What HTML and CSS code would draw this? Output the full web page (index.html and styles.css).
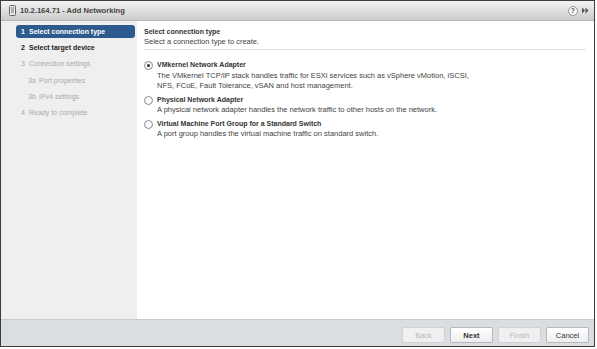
FILE: index.html
```html
<!DOCTYPE html>
<html>
<head>
<meta charset="utf-8">
<link rel="stylesheet" href="styles.css">
</head>
<body>
<div class="window">
  <div class="titlebar">
    <svg class="host-icon" width="7" height="11" viewBox="0 0 7 11">
      <rect x="0.5" y="0.5" width="6" height="10" rx="1" fill="#e8e8e8" stroke="#666"/>
      <line x1="2" y1="3" x2="5" y2="3" stroke="#777"/>
      <line x1="2" y1="5" x2="5" y2="5" stroke="#777"/>
      <line x1="2" y1="7" x2="5" y2="7" stroke="#777"/>
    </svg>
    <span class="title">10.2.164.71 - Add Networking</span>
    <span class="spacer"></span>
    <span class="help">?</span>
    <svg class="expand" width="7" height="7" viewBox="0 0 7 7">
      <path d="M0 0.5 L3 3.5 L0 6.5 Z M3.5 0.5 L6.5 3.5 L3.5 6.5 Z" fill="#555"/>
    </svg>
  </div>
  <div class="main">
    <div class="sidebar">
      <div class="step active"><span class="num">1</span>Select connection type</div>
      <div class="step current"><span class="num">2</span>Select target device</div>
      <div class="step"><span class="num">3</span>Connection settings</div>
      <div class="step sub"><span class="num">3a</span>Port properties</div>
      <div class="step sub"><span class="num">3b</span>IPv4 settings</div>
      <div class="step"><span class="num">4</span>Ready to complete</div>
    </div>
    <div class="content">
      <div class="heading">Select connection type</div>
      <div class="subheading">Select a connection type to create.</div>
      <div class="options">
        <div class="option">
          <div class="radio checked"></div>
          <div class="opt-text">
            <div class="opt-title">VMkernel Network Adapter</div>
            <div class="opt-desc">The VMkernel TCP/IP stack handles traffic for ESXi services such as vSphere vMotion, iSCSI,<br>NFS, FCoE, Fault Tolerance, vSAN and host management.</div>
          </div>
        </div>
        <div class="option">
          <div class="radio"></div>
          <div class="opt-text">
            <div class="opt-title">Physical Network Adapter</div>
            <div class="opt-desc">A physical network adapter handles the network traffic to other hosts on the network.</div>
          </div>
        </div>
        <div class="option">
          <div class="radio"></div>
          <div class="opt-text">
            <div class="opt-title">Virtual Machine Port Group for a Standard Switch</div>
            <div class="opt-desc">A port group handles the virtual machine traffic on standard switch.</div>
          </div>
        </div>
      </div>
    </div>
  </div>
  <div class="footer">
    <button class="btn disabled">Back</button>
    <button class="btn primary">Next</button>
    <button class="btn disabled">Finish</button>
    <button class="btn">Cancel</button>
  </div>
</div>
</body>
</html>
```
FILE: styles.css
```css
* { box-sizing: border-box; }
html, body { margin: 0; padding: 0; }
body {
  width: 597px;
  height: 349px;
  background: #ffffff;
  font-family: "Liberation Sans", Arial, sans-serif;
  font-size: 7.5px;
  color: #333;
}
.window {
  width: 595px;
  height: 347px;
  border: 1px solid #3c3c3c;
  display: flex;
  flex-direction: column;
  background: #fff;
}
.titlebar {
  height: 20px;
  flex: none;
  display: flex;
  align-items: center;
  padding: 0 5px 0 8px;
  background: linear-gradient(#f4f4f4, #cbcbcb);
  border-bottom: 1px solid #b8b8b8;
}
.host-icon { flex: none; }
.title {
  margin-left: 4px;
  font-weight: bold;
  font-size: 7.6px;
  color: #444;
}
.spacer { flex: 1; }
.help {
  width: 10px;
  height: 10px;
  border-radius: 50%;
  background: #f8f8f8;
  border: 1px solid #999;
  font-size: 7px;
  font-weight: bold;
  color: #555;
  display: flex;
  align-items: center;
  justify-content: center;
  margin-right: 4px;
}
.expand { flex: none; }
.main {
  flex: 1;
  display: flex;
  min-height: 0;
}
.sidebar {
  width: 136px;
  flex: none;
  background: #efefef;
  padding: 4px 2px 0 15px;
  display: flex;
  flex-direction: column;
  gap: 3px;
}
.step {
  height: 13.2px;
  line-height: 13px;
  padding-left: 5px;
  color: #aaa;
  font-size: 7px;
  white-space: nowrap;
}
.step .num { display: inline-block; width: 8px; }
.step.sub { padding-left: 12px; }
.step.sub .num { width: 11px; }
.step.active {
  background: #2e5b8d;
  color: #fff;
  font-weight: bold;
  border-radius: 3px;
}
.step.current { color: #222; font-weight: bold; }
.content {
  flex: 1;
  padding: 6px 8px 0 7px;
}
.heading {
  color: #333;
  font-weight: bold;
  font-size: 7px;
  line-height: 10px;
  height: 10px;
}
.subheading {
  color: #444;
  line-height: 10px;
  padding-bottom: 2px;
  border-bottom: 1px solid #e3e3e3;
}
.options {
  padding-top: 10px;
  display: flex;
  flex-direction: column;
  gap: 3px;
}
.option {
  display: flex;
  align-items: flex-start;
}
.radio {
  width: 9px;
  height: 9px;
  border: 1px solid #8a8a8a;
  border-radius: 50%;
  background: #fafafa;
  margin: 1px 4px 0 0;
  position: relative;
  flex: none;
}
.radio.checked::after {
  content: "";
  position: absolute;
  left: 2px;
  top: 2px;
  width: 3px;
  height: 3px;
  border-radius: 50%;
  background: #333;
}
.opt-title {
  font-weight: bold;
  font-size: 7px;
  color: #333;
  line-height: 10.5px;
}
.opt-desc {
  color: #444;
  line-height: 10.5px;
}
.footer {
  height: 27px;
  flex: none;
  background: #dadee3;
  border-top: 1px solid #c9cdd2;
  display: flex;
  justify-content: flex-end;
  align-items: flex-end;
  padding: 0 5px 3px 0;
  gap: 5px;
}
.btn {
  font-family: "Liberation Sans", Arial, sans-serif;
  font-size: 7.5px;
  height: 16px;
  width: 43px;
  padding: 0;
  border: 1px solid #b5b8bc;
  border-radius: 2px;
  background: linear-gradient(#ffffff, #eeeeee);
  color: #333;
}
.btn.primary { font-weight: bold; }
.btn.disabled { color: #b8b8b8; background: #f0f0f0; border-color: #cfd2d5; }
```
